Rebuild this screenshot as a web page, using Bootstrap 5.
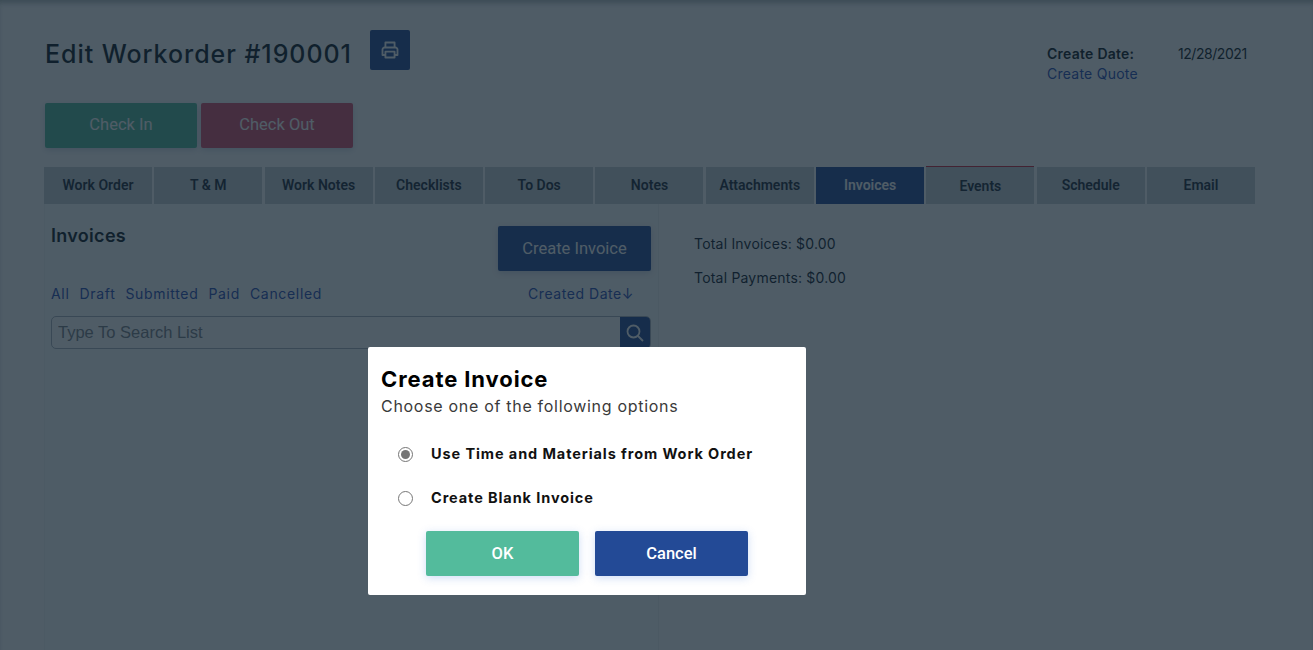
<!DOCTYPE html>
<html lang="en"><head><meta charset="utf-8">
<title>Edit Workorder</title>
<link href="https://cdn.jsdelivr.net/npm/bootstrap@5.3.0/dist/css/bootstrap.min.css" rel="stylesheet">
<style>
html,body{height:100%;overflow:hidden}
body{font-family:"Inter","Noto Sans",sans-serif;color:#212b36;background:#fff}
.page-shell{height:650px;padding:30px 58px 0 44px;display:flex;flex-direction:column}
.head-row{height:73px;display:flex;align-items:flex-start}
.page-title{font-family:"Inter",sans-serif;font-size:25px;font-weight:500;letter-spacing:.95px;line-height:48px;margin:0 0 0 1px;color:#0f1a24;white-space:nowrap}
.print-btn{width:40px;height:40px;background:#234a96;border-radius:2px;margin-left:18px;display:flex;align-items:center;justify-content:center;border:0;padding:0}
.date-block{margin-left:auto;width:208px;font-size:14px;line-height:20px;padding-top:14px;color:#0f1a24}
.date-top{display:flex;white-space:nowrap}
.date-label{font-weight:600;width:131px;letter-spacing:.25px}
.date-val{letter-spacing:-.45px}
.quote-link{color:#2a4db5;text-decoration:none;letter-spacing:.25px}
.check-row{display:flex;gap:4px;height:63px;padding-left:1px}
.act-btn{width:152px;height:45px;border:0;border-radius:2px;color:#fff;font-family:"Roboto",sans-serif;font-size:16.5px;padding:0 0 1px;box-shadow:0 2px 6px rgba(30,60,120,.2)}
.act-in{background:#53bb9c}.act-out{background:#d9506c}
.tab-strip{display:flex;gap:2.3px;height:38px;margin:0;padding:1px 0 0}
.tab-cell{flex:1 1 0;background:#c8d0d4;font-family:"Roboto",sans-serif;font-weight:600;font-size:14px;color:#1c2a38;text-align:center;line-height:36px;height:37px}
.tab-on{background:#234a96;color:#fff}
.tab-ev{border-top:1px solid #d2233c;margin-top:-1px;height:38px;line-height:38px}
.split{display:flex;flex:1;min-height:0}
.left-pane{width:615px;border-right:1px solid #f0f2f4;border-left:1px solid #f4f5f7;background:#fcfdfd;padding:0 7px 0 6px}
.pane-top{display:flex;justify-content:space-between;height:78px;padding-top:21px}
.pane-title{font-family:"Inter",sans-serif;font-size:18px;font-weight:600;letter-spacing:.3px;line-height:22px;margin:0;color:#0f1a24}
.create-btn{width:153px;height:45px;margin-top:1px;padding:1px 0 0;background:#234a96;border:0;border-radius:2px;color:#fff;font-family:"Roboto",sans-serif;font-size:16.5px;box-shadow:0 2px 6px rgba(30,60,120,.2)}
.filter-row{display:flex;justify-content:space-between;height:34px;font-size:14px;letter-spacing:.68px;line-height:24px;padding-right:17px}
.filter-row a{color:#2a4db5;text-decoration:none;margin-right:10px}
.filter-row .sorter{margin-right:0;letter-spacing:.55px}
.search-box{display:flex;height:33px;border:1px solid #a9b3bd;border-radius:5px;overflow:hidden;background:#fff}
.search-box input{flex:1;border:0;outline:0;padding:0 6px;font-family:"Liberation Sans",sans-serif;font-size:16.5px;background:transparent}
.search-box input::placeholder{color:#7a8087;opacity:1}
.search-go{width:30px;background:#234a96;display:flex;align-items:center;justify-content:center}
.right-pane{padding:30px 0 0 35px;font-size:14px;letter-spacing:.2px;color:#101a2c}
.right-pane p{margin:0 0 14px;line-height:20px}
.veil{position:fixed;inset:0;background:rgba(18,35,48,.74);box-shadow:inset 0 5px 5px -2px rgba(18,35,48,.3)}
.dialog-box{position:absolute;left:368px;top:347px;width:438px;height:248px;background:#fff;border-radius:2px;padding:20px 13px 0}
.dialog-title{font-family:"Inter",sans-serif;font-size:22px;font-weight:700;letter-spacing:.9px;line-height:24px;margin:0;color:#000}
.dialog-sub{font-size:16px;font-weight:400;letter-spacing:.7px;line-height:22px;color:#3a3a3a;margin:4px 0 0}
.opt-list{padding:15px 0 0 16px}
.opt-line{display:flex;align-items:center;height:44px;margin:0;font-weight:700;font-size:14.5px;letter-spacing:.9px;color:#111;white-space:nowrap}
.opt-line input{width:15px;height:15px;margin:0 18px 0 1px;accent-color:#757575}
.dialog-actions{display:flex;justify-content:center;gap:16px;margin-top:11px}
.dlg-btn{width:153px;height:45px;border:0;border-radius:2px;color:#fff;font-family:"Roboto",sans-serif;font-size:16.5px;font-weight:500;padding:1px 0 0;box-shadow:0 2px 8px rgba(60,120,220,.25)}
</style></head><body>
<div class="page-shell">
 <div class="head-row">
  <h1 class="page-title">Edit Workorder #190001</h1>
  <button class="print-btn" aria-label="Print"><svg width="20" height="20" viewBox="0 0 24 24" fill="none" stroke="#fff" stroke-width="2.2" stroke-linejoin="round"><path d="M6.5 9V3h11v6"/><path d="M6.5 18H3v-6.5A2.5 2.5 0 0 1 5.500 9h13a2.500 2.500 0 0 1 2.500 2.500V18h-3.500"/><rect x="6.500" y="14" width="11" height="7"/></svg></button>
  <div class="date-block"><div class="date-top"><span class="date-label">Create Date:</span><span class="date-val">12/28/2021</span></div><a class="quote-link" href="#">Create Quote</a></div>
 </div>
 <div class="check-row"><button class="act-btn act-in">Check In</button><button class="act-btn act-out">Check Out</button></div>
 <div class="tab-strip">
  <div class="tab-cell">Work Order</div><div class="tab-cell">T &amp; M</div><div class="tab-cell">Work Notes</div><div class="tab-cell">Checklists</div><div class="tab-cell">To Dos</div><div class="tab-cell">Notes</div><div class="tab-cell">Attachments</div><div class="tab-cell tab-on">Invoices</div><div class="tab-cell tab-ev">Events</div><div class="tab-cell">Schedule</div><div class="tab-cell">Email</div>
 </div>
 <div class="split">
  <div class="left-pane">
   <div class="pane-top"><h2 class="pane-title">Invoices</h2><button class="create-btn">Create Invoice</button></div>
   <div class="filter-row"><div><a href="#">All</a><a href="#">Draft</a><a href="#">Submitted</a><a href="#">Paid</a><a href="#">Cancelled</a></div><a class="sorter" href="#">Created Date↓</a></div>
   <div class="search-box"><input type="text" placeholder="Type To Search List"><div class="search-go"><svg width="18" height="18" viewBox="0 0 18 18" fill="none" stroke="#fff" stroke-width="1.800"><circle cx="7.500" cy="7.500" r="6"/><path d="M12 12l5 5"/></svg></div></div>
  </div>
  <div class="right-pane"><p>Total Invoices: $0.00</p><p>Total Payments: $0.00</p></div>
 </div>
</div>
<div class="veil"></div>
<div class="dialog-box">
 <h3 class="dialog-title">Create Invoice</h3>
 <p class="dialog-sub">Choose one of the following options</p>
 <div class="opt-list">
  <label class="opt-line"><input type="radio" name="src" checked>Use Time and Materials from Work Order</label>
  <label class="opt-line"><input type="radio" name="src">Create Blank Invoice</label>
 </div>
 <div class="dialog-actions"><button class="dlg-btn act-in">OK</button><button class="dlg-btn tab-on">Cancel</button></div>
</div>
<script src="https://cdn.jsdelivr.net/npm/bootstrap@5.3.0/dist/js/bootstrap.bundle.min.js"></script>
</body></html>
